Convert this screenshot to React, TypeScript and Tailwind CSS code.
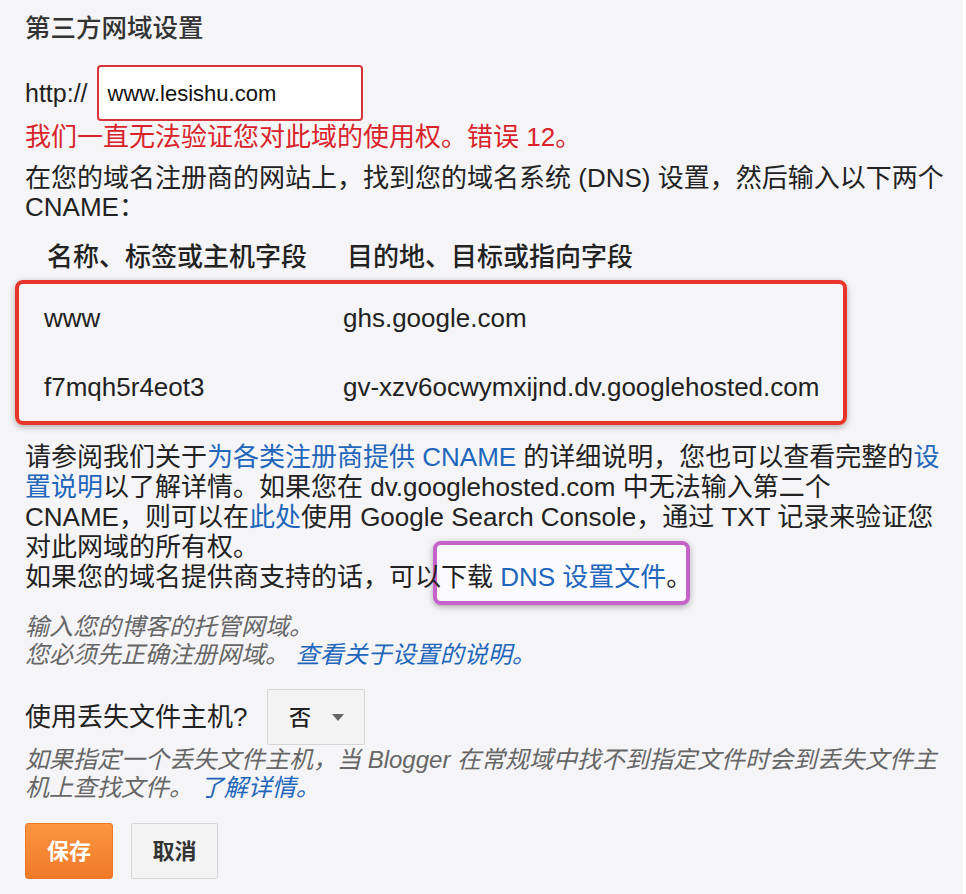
import React from "react";

const font = { fontFamily: '"Liberation Sans", "Noto Sans CJK SC", sans-serif' };

function L({ children }: { children: React.ReactNode }) {
  return <span className="text-[#2266bb]">{children}</span>;
}

export default function App() {
  return (
    <div className="flex w-[966px] h-[894px] overflow-hidden bg-white" style={font}>
      <div className="w-[963px] h-full bg-[#f5f5f7] text-[#222] text-[26px] pl-[25px] pt-[13px]">
        {/* Title */}
        <div className="h-[30px] leading-[30px] font-medium text-[#333] text-[25.5px] whitespace-nowrap">第三方网域设置</div>

        {/* Input row */}
        <div className="mt-[22px] flex items-center h-[56px]">
          <span className="leading-[30px] text-[25px]">http://</span>
          <div className="ml-[9px] w-[266px] h-[56px] bg-white border-2 border-[#d8333a] rounded-[4px] flex items-center pl-[9px] text-[22px] text-[#111]">
            www.lesishu.com
          </div>
        </div>

        {/* Error */}
        <div className="mt-[1px] h-[30px] leading-[30px] text-[#d9232b] whitespace-nowrap">我们一直无法验证您对此域的使用权。错误 12。</div>

        {/* Para 1 */}
        <div className="mt-[11px] leading-[30px] whitespace-nowrap">
          <div className="h-[30px]">在您的域名注册商的网站上，找到您的域名系统 (DNS) 设置，然后输入以下两个</div>
          <div className="h-[30px] -mt-[1px]">CNAME：</div>
        </div>

        {/* Table header */}
        <div className="mt-[20px] flex h-[30px] leading-[30px] font-medium text-[26px] whitespace-nowrap">
          <div className="w-[300px] pl-[22px]">名称、标签或主机字段</div>
          <div className="pl-[22px]">目的地、目标或指向字段</div>
        </div>

        {/* Records box */}
        <div className="mt-[8px] -ml-[10px] w-[832px] h-[145px] border-[4px] border-[#e8352b] rounded-[8px] shadow-[0_2px_6px_rgba(0,0,0,0.3)] pl-[25px] pt-[19px] whitespace-nowrap">
          <div className="flex h-[30px] leading-[30px]">
            <div className="w-[299px]">www</div>
            <div>ghs.google.com</div>
          </div>
          <div className="flex h-[30px] leading-[30px] mt-[39px]">
            <div className="w-[299px]">f7mqh5r4eot3</div>
            <div>gv-xzv6ocwymxijnd.dv.googlehosted.com</div>
          </div>
        </div>

        {/* Para 2 */}
        <div className="mt-[17px] leading-[30px] whitespace-nowrap">
          <div className="h-[30px]">请参阅我们关于<L>为各类注册商提供 CNAME</L> 的详细说明，您也可以查看完整的<L>设</L></div>
          <div className="h-[30px]"><L>置说明</L>以了解详情。如果您在 dv.googlehosted.com 中无法输入第二个</div>
          <div className="h-[30px]">CNAME，则可以在<L>此处</L>使用 Google Search Console，通过 TXT 记录来验证您</div>
          <div className="h-[30px]">对此网域的所有权。</div>
          <div className="h-[30px] relative">
            <div className="absolute left-[408px] top-[-21px] w-[257px] h-[64px] border-[4px] border-[#c463c9] rounded-[8px] bg-[#fbfbfd] shadow-[0_2px_6px_rgba(0,0,0,0.3)]"></div>
            <span className="relative">如果您的域名提供商支持的话，可以下载 <L>DNS 设置文件</L>。</span>
          </div>
        </div>

        {/* Italic hints */}
        <div className="mt-[21px] italic text-[#666] text-[24px] leading-[28px] whitespace-nowrap">
          <div className="h-[28px]">输入您的博客的托管网域。</div>
          <div className="h-[28px]">您必须先正确注册网域。 <L>查看关于设置的说明。</L></div>
        </div>

        {/* Missing file host */}
        <div className="mt-[20px] flex items-center h-[56px]">
          <span className="leading-[30px] w-[242px]">使用丢失文件主机?</span>
          <div className="w-[98px] h-[56px] border border-[#d6d6d6] rounded-[2px] bg-[#f3f3f4] flex items-center pl-[21px]">
            <span className="text-[22px] font-medium">否</span>
            <svg className="ml-[21px]" width="12" height="7" viewBox="0 0 12 7">
              <path d="M0 0 L12 0 L6 7 Z" fill="#666" />
            </svg>
          </div>
        </div>

        <div className="mt-[1px] italic text-[#666] text-[24px] leading-[28px] whitespace-nowrap">
          <div className="h-[28px]">如果指定一个丢失文件主机，当 Blogger 在常规域中找不到指定文件时会到丢失文件主</div>
          <div className="h-[28px]">机上查找文件。 <L>了解详情。</L></div>
        </div>

        {/* Buttons */}
        <div className="mt-[21px] flex gap-[18px]">
          <button className="w-[88px] h-[56px] rounded-[3px] bg-gradient-to-b from-[#fb953f] to-[#f07a28] border border-[#e9782a] text-white font-bold text-[22px]">保存</button>
          <button className="w-[87px] h-[56px] rounded-[2px] bg-[#f3f3f4] border border-[#d6d6d6] text-[#333] font-bold text-[22px]">取消</button>
        </div>
      </div>
      <div className="w-[3px] h-full bg-white"></div>
    </div>
  );
}
